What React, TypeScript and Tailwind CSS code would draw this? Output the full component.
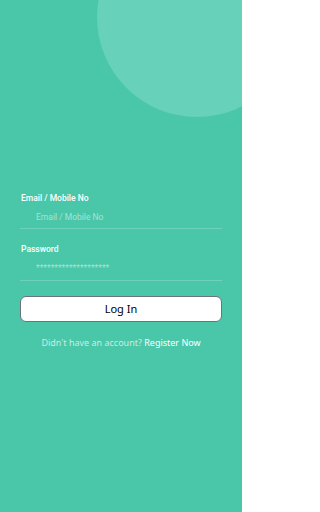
export default function App() {
  return (
    <div className="relative h-[512px] w-[242px] overflow-hidden bg-[#4ac7a9] font-['Roboto',sans-serif]">
      <div className="absolute left-[97px] top-[-83px] h-[200px] w-[200px] rounded-full bg-[#67d1b9]" />

      <div className="relative px-[20px] pt-[193px]">
        <label className="block pl-[1px] text-[8.5px] font-medium leading-[10px] text-white">Email / Mobile No</label>
        <input
          placeholder="Email / Mobile No"
          className="mt-[5px] block h-[21px] w-full min-w-0 border-b border-white/20 bg-transparent pb-[3px] pl-[16px] text-[8.5px] text-white outline-none placeholder:text-white/50"
        />

        <label className="mt-[15px] block pl-[1px] text-[8.5px] font-medium leading-[10px] text-white">Password</label>
        <input
          type="password"
          placeholder="********************"
          className="mt-[5px] block h-[22px] w-full min-w-0 border-b border-white/20 bg-transparent pb-[3px] pl-[16px] text-[8.5px] text-white outline-none placeholder:text-white/50"
        />

        <button className="mt-[15px] flex h-[26px] w-full items-center justify-center rounded-[6px] border border-gray-500 bg-white font-['Noto_Sans',sans-serif] text-[11px] text-black">
          Log In
        </button>

        <p className="mt-[14px] text-center font-['Noto_Sans',sans-serif] text-[9px] text-white/70">
          Didn't have an account? <span className="text-white">Register Now</span>
        </p>
      </div>
    </div>
  );
}
